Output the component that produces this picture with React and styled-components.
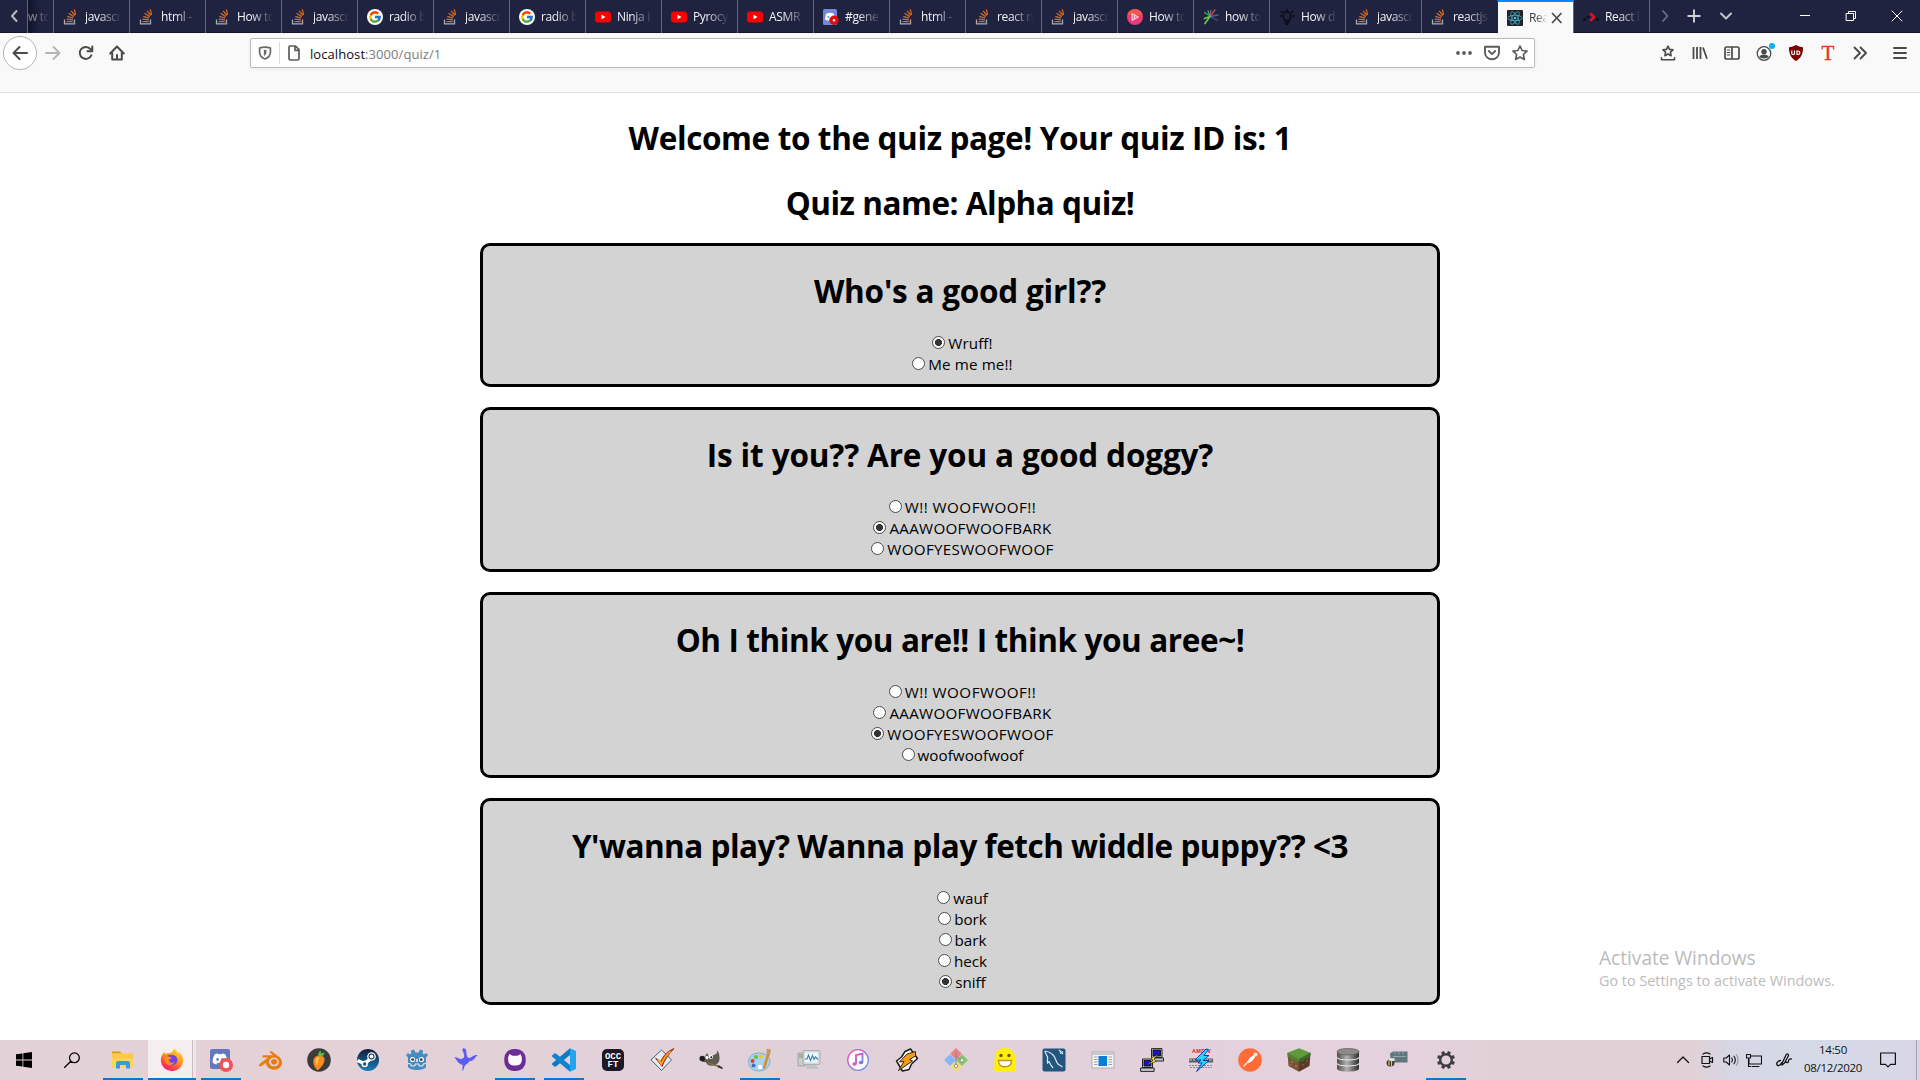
import React from "react";
import styled, { createGlobalStyle, css } from "styled-components";
import { FcGoogle } from "react-icons/fc";
import { FaReact, FaDiscord } from "react-icons/fa";
import { SiBlender } from "react-icons/si";

const ui = '"Open Sans", "Noto Sans", sans-serif';

const GlobalStyle = createGlobalStyle`
  html, body { margin: 0; padding: 0; }
  body { width: 1920px; height: 1080px; overflow: hidden; background: #fff; font-family: ${ui}; }
  svg { display: block; flex: none; }
`;

const Screen = styled.div`
  display: flex;
  flex-direction: column;
  width: 1920px;
  height: 1080px;
  position: relative;
  overflow: hidden;
`;

/* ---------- tab strip ---------- */

const TabStrip = styled.header`
  display: flex;
  height: 33px;
  flex: none;
  background: #20233f;
  box-shadow: inset 0 -1px 0 #11142b;
`;

const StripButton = styled.div`
  box-sizing: border-box;
  display: flex;
  align-items: center;
  justify-content: center;
  width: ${(p) => p.$w}px;
  height: 32px;
  flex: none;
  border-left: ${(p) => (p.$divided ? "1px solid #62657b" : "0")};
`;

const TabBox = styled.div`
  box-sizing: border-box;
  display: flex;
  align-items: center;
  width: 76px;
  height: 33px;
  padding: 1px 0 0 9px;
  flex: none;
  border-left: 1px solid #62657b;
  ${(p) =>
    p.$active &&
    css`
      background: #f9f9fa;
      padding: 0 0 0 9px;
      border-left-color: #20233f;
      border-top: 2px solid #0a84ff;
    `}
`;

const PartialTab = styled(TabBox)`
  width: 26px;
  padding: 1px 0 0 0;
  background: linear-gradient(to right, #11132a, #20233f 12px);
`;

const TabTitle = styled.span`
  width: ${(p) => p.$w || 39}px;
  margin-left: ${(p) => p.$gap ?? 6}px;
  flex: none;
  overflow: hidden;
  white-space: nowrap;
  font-size: 12px;
  line-height: 18px;
  letter-spacing: -0.35px;
  color: ${(p) => (p.$dark ? "#3a3a40" : "#f2f2f6")};
  opacity: ${(p) => (p.$dim ? 0.5 : 1)};
  -webkit-mask-image: linear-gradient(to right, #000 35%, transparent 93%);
  mask-image: linear-gradient(to right, #000 35%, transparent 93%);
`;

const Grow = styled.div`
  flex: 1;
`;

/* ---------- navigation bar ---------- */

const NavBar = styled.nav`
  box-sizing: border-box;
  display: flex;
  align-items: flex-start;
  height: 60px;
  flex: none;
  padding-left: 3px;
  background: #f9f9fa;
  border-bottom: 1px solid #e0e0e1;
`;

const NavSlot = styled.div`
  display: flex;
  align-items: center;
  justify-content: center;
  width: ${(p) => p.$w || 32}px;
  height: 40px;
  flex: none;
`;

const BackCircle = styled.div`
  box-sizing: border-box;
  display: flex;
  align-items: center;
  justify-content: center;
  width: 34px;
  height: 34px;
  margin-top: 3px;
  border: 1px solid #b4b4b4;
  border-radius: 50%;
  background: #fff;
  flex: none;
`;

const UrlBar = styled.div`
  box-sizing: border-box;
  display: flex;
  align-items: center;
  width: 1285px;
  height: 30px;
  margin: 5px 117px 0 119px;
  border: 1px solid #b9b9bb;
  border-radius: 2px;
  background: #fff;
  box-shadow: 0 1px 4px rgba(0, 0, 0, 0.06);
  flex: none;
`;

const UrlSlot = styled.div`
  display: flex;
  align-items: center;
  justify-content: center;
  width: 28px;
  height: 28px;
  flex: none;
`;

const UrlDivider = styled.div`
  width: 1px;
  height: 22px;
  background: #dcdcdc;
`;

const Address = styled.span`
  margin-left: 2px;
  padding-top: 1px;
  flex: 1;
  font-size: 13px;
  line-height: 18px;
  letter-spacing: 0.07px;
  color: #0c0c0d;
`;

const AddressPath = styled.span`
  color: #7b7b7e;
`;

const NavDivider = styled.div`
  width: 1px;
  height: 33px;
  margin: 3px 0 0 3px;
  background: #dcdcdd;
`;

const TypeMark = styled.span`
  font-family: "Liberation Serif", serif;
  font-size: 21px;
  line-height: 28px;
  color: #dc3a23;
  -webkit-text-stroke: 0.4px #dc3a23;
`;

/* ---------- quiz page ---------- */

const Page = styled.main`
  display: flex;
  flex-direction: column;
  align-items: center;
  flex: 1;
  background: #fff;
`;

const Heading = styled.h1`
  box-sizing: border-box;
  margin: 21.44px 0 0;
  height: 43px;
  padding-top: 2px;
  font-size: 31.5px;
  line-height: 43px;
  font-weight: 700;
  letter-spacing: ${(p) => p.$ls || 0}px;
  white-space: nowrap;
  color: #000;
`;

const CardList = styled.div`
  display: flex;
  flex-direction: column;
  gap: 20px;
  margin-top: 21.12px;
`;

const Card = styled.section`
  box-sizing: border-box;
  display: flex;
  flex-direction: column;
  align-items: center;
  width: 960px;
  height: ${(p) => 102 + p.$rows * 21}px;
  border: 3px solid #000;
  border-radius: 10px;
  background: #d3d3d3;
`;

const Options = styled.div`
  display: flex;
  flex-direction: column;
  align-items: center;
  margin-top: 22.56px;
`;

const Option = styled.label`
  display: flex;
  height: 21px;
  padding-left: 5px;
  font-size: 15.2px;
  line-height: 21px;
  letter-spacing: ${(p) => p.$ls || 0}px;
  white-space: nowrap;
  color: #000;
`;

const Radio = styled.input`
  appearance: none;
  box-sizing: border-box;
  width: 13px;
  height: 13px;
  margin: 3px 3px 0 0;
  border: 1px solid #4a4a4a;
  border-radius: 50%;
  background: #fff;
  &:checked {
    background: radial-gradient(circle, #333 3.2px, #fff 3.8px);
  }
`;

const Watermark = styled.aside`
  position: absolute;
  left: 1599px;
  top: 944px;
  color: #bbb;
  white-space: nowrap;
`;

const WatermarkTitle = styled.div`
  font-size: 19.1px;
  line-height: 28px;
`;

const WatermarkText = styled.div`
  font-size: 14.4px;
  line-height: 18px;
`;

/* ---------- taskbar ---------- */

const Taskbar = styled.footer`
  display: flex;
  height: 40px;
  flex: none;
  background: linear-gradient(
    to right,
    #e2d2d8 0,
    #e5d1d8 300px,
    #e0d1d8 800px,
    #e4d1de 1400px,
    #e1d1d6 1500px,
    #e1d1d6 1690px,
    #d6d6e4 1730px,
    #d5dae6 1800px,
    #d8d6e6 1920px
  );
`;

const TaskSlot = styled.div`
  display: flex;
  align-items: center;
  justify-content: center;
  width: ${(p) => p.$w || 48}px;
  height: 40px;
  flex: none;
`;

const Launcher = styled.div`
  box-sizing: border-box;
  display: flex;
  align-items: center;
  justify-content: center;
  width: ${(p) => (p.$focused ? 48 : 40)}px;
  height: 40px;
  margin: ${(p) => (p.$focused ? "0 0 0 1px" : "0 4px 0 5px")};
  padding-top: 2px;
  border-bottom: 2px solid ${(p) => (p.$open ? "#0078d7" : "transparent")};
  background: ${(p) =>
    p.$focused
      ? "linear-gradient(to right, #f5eef1 44px, #cbbcc2 44px 45px, #efe6ea 45px) padding-box"
      : "none"};
  flex: none;
`;

const Launchers = styled.div`
  display: flex;
  margin-left: 2px;
`;

const Clock = styled.div`
  width: 66px;
  margin-left: -1px;
  padding-top: 1px;
  text-align: center;
  font-size: 11.5px;
  line-height: 18px;
  letter-spacing: -0.3px;
  color: #111;
  flex: none;
`;

const ShowDesktop = styled.div`
  width: 3px;
  height: 40px;
  margin-left: 6px;
  border-left: 1px solid #a3a3b3;
`;

/* ---------- small drawings ---------- */

const Icon = ({ s = 16, v = 16, children, ...rest }) => (
  <svg width={s} height={s} viewBox={`0 0 ${v} ${v}`} fill="none" {...rest}>
    {children}
  </svg>
);

const Line = ({ d, c = "#4a4a4d", w = 2, s = 16, cap = "round", children }) => (
  <Icon s={s} stroke={c} strokeWidth={w} strokeLinecap={cap} strokeLinejoin="round">
    <path d={d} />
    {children}
  </Icon>
);

const StackIcon = () => (
  <Icon>
    <path d="M1.500 10.500v4.300h10v-4.300" stroke="#a9abb3" strokeWidth="1.300" />
    <path d="M3.500 12.600h6.300M3.600 10.200l6.300.6M4.300 7.400l5.800 1.700M5.600 4.300l5.200 3.300M8.200 1.900l3.700 4.600M11.300.4l1.300 5.400" stroke="#d96a1c" strokeWidth="1.250" />
  </Icon>
);

const DiscordTab = () => (
  <Icon>
    <rect width="14" height="16" rx="1.500" fill="#7289da" />
    <path d="M3 5c2.500-1.600 5.500-1.600 8 0l1 5.500c-3 1.800-7 1.800-10 0z" fill="#fff" />
    <circle cx="5.300" cy="8" r="1" fill="#7289da" />
    <circle cx="11" cy="11.300" r="4.700" fill="#e00b0b" />
    <circle cx="11" cy="11.300" r="1.200" fill="#fff" />
  </Icon>
);

const PinkPlay = () => (
  <Icon>
    <circle cx="8" cy="8" r="8" fill="#ec3a72" />
    <path d="M0.300 6a8 8 0 0 1 15.400 0z" fill="#f2584c" />
    <path d="M5 4.500v7l6.500-3.500zM7.500 5.800v4.400" stroke="#fbd0da" strokeWidth="1" fill="#f07a94" />
  </Icon>
);

const Burst = () => (
  <Icon strokeWidth="1.300" strokeLinecap="round">
    <path d="M7 7L1.500 3.500M7 7L5 1.800" stroke="#4fa85a" />
    <path d="M7 7l1-5.500" stroke="#7a5bb0" />
    <path d="M7.500 7l4.500-6" stroke="#d6483b" />
    <path d="M7.500 7.500L15 6" stroke="#3f6f86" />
    <path d="M8 8l6.500 3.500" stroke="#4a4a96" />
    <path d="M7 7.500L2 14.500M7 7.500l-5.500 2" stroke="#6cc04a" strokeWidth="1.700" />
  </Icon>
);

const Bulb = () => (
  <Icon stroke="#080a14" strokeWidth="1.500" strokeLinecap="round">
    <path d="M5.800 11.500C5.500 9.800 4 9 4 6.800a4 4 0 0 1 8 0c0 2.200-1.500 3-1.800 4.700zM6 13.500h4M7 15.200h2M8 .5v.8M1 7h1M14 7h1M2.500 2.500l.6.600M13.500 2.500l-.6.600" />
  </Icon>
);

const ReactTab = () => (
  <Icon>
    <rect width="16" height="16" rx="1" fill="#222429" />
    <g transform="translate(0.500 0.500)">
      <FaReact size={15} color="#4fc0de" />
    </g>
  </Icon>
);

const RouterTab = () => (
  <Icon>
    <circle cx="1.500" cy="10.500" r="1.500" fill="#0b0c14" />
    <circle cx="5" cy="8" r="1.300" fill="#0b0c14" />
    <circle cx="14.500" cy="10.500" r="1.500" fill="#0b0c14" />
    <path d="M8 5l3 3-3 3.200" stroke="#d7122f" strokeWidth="2.600" strokeLinecap="round" strokeLinejoin="round" />
  </Icon>
);

const tabIcons = {
  stack: <StackIcon />,
  google: (
    <Icon>
      <circle cx="8" cy="8" r="8" fill="#fff" />
      <g transform="translate(1 1)">
        <FcGoogle size={14} />
      </g>
    </Icon>
  ),
  youtube: (
    <Icon>
      <rect y="2.500" width="16" height="11" rx="3" fill="#f00" />
      <path d="M6.500 5.700v4.600l4-2.300z" fill="#fff" />
    </Icon>
  ),
  discord: <DiscordTab />,
  pink: <PinkPlay />,
  burst: <Burst />,
  bulb: <Bulb />,
  react: <ReactTab />,
  router: <RouterTab />,
};

const tabs = [
  ["stack", "javascr"],
  ["stack", "html -"],
  ["stack", "How to"],
  ["stack", "javascr"],
  ["google", "radio b"],
  ["stack", "javascr"],
  ["google", "radio b"],
  ["youtube", "Ninja i"],
  ["youtube", "Pyrocy"],
  ["youtube", "ASMR"],
  ["discord", "#gene"],
  ["stack", "html -"],
  ["stack", "react n"],
  ["stack", "javascr"],
  ["pink", "How to"],
  ["burst", "how to"],
  ["bulb", "How d"],
  ["stack", "javascr"],
  ["stack", "reactjs"],
  ["react", "Rea", true],
  ["router", "React l"],
];

const questions = [
  { title: "Who's a good girl??", ls: -0.22, options: ["Wruff!", "Me me me!!"], pick: 0 },
  {
    title: "Is it you?? Are you a good doggy?",
    ls: -0.15,
    options: ["W!! WOOFWOOF!!", "AAAWOOFWOOFBARK", "WOOFYESWOOFWOOF"],
    pick: 1,
  },
  {
    title: "Oh I think you are!! I think you aree~!",
    ls: -0.4,
    options: ["W!! WOOFWOOF!!", "AAAWOOFWOOFBARK", "WOOFYESWOOFWOOF", "woofwoofwoof"],
    pick: 2,
  },
  {
    title: "Y'wanna play? Wanna play fetch widdle puppy?? <3",
    ls: -0.5,
    options: ["wauf", "bork", "bark", "heck", "sniff"],
    pick: 4,
  },
];

const optionSpacing = {
  "W!! WOOFWOOF!!": 0.47,
  AAAWOOFWOOFBARK: 0.28,
  WOOFYESWOOFWOOF: 0.31,
  "Me me me!!": 0.1,
  woofwoofwoof: 0.04,
  "Wruff!": 0.1,
};

const Explorer = () => (
  <Icon s={24} v={24}>
    <path d="M1 3.500h8l2 2.500h-10z" fill="#d99c0b" />
    <path d="M1 5.500h21.500v14H1z" fill="#ffd561" />
    <path d="M1 5.500h21.500v5H1z" fill="#fcc94b" />
    <path d="M5 20.500v-5.500a2 2 0 0 1 2-2h10a2 2 0 0 1 2 2v5.500h-4v-3.500h-6v3.500z" fill="#3a97e0" />
  </Icon>
);

const Firefox = () => (
  <Icon s={24} v={24}>
    <defs>
      <linearGradient id="ff" x1="0.800" y1="0" x2="0.200" y2="1">
        <stop offset="0" stopColor="#ffe226" />
        <stop offset="0.450" stopColor="#ff9026" />
        <stop offset="0.750" stopColor="#ff3f4a" />
        <stop offset="1" stopColor="#e2128a" />
      </linearGradient>
    </defs>
    <path d="M14 .5c2 1.500 3.500 3 4.200 5 .8-.6.8-1.200.8-1.800 3 2.800 4.500 6 4.300 9.300A11.300 11.300 0 0 1 .8 13C.7 9.500 2 6.500 4.500 3.800c0 1.400.3 2 1 2.700C7 5 8.500 4.800 10 5.200 11.500 4.500 13.200 3 14 .5z" fill="url(#ff)" />
    <path d="M7 8c3-1.800 6-1.500 8.500 0 2.300 2 2.500 5 .8 7.300-2 2.300-5.600 2.400-7.600.3C7 14 7 12 8 10.800c1.200-.3 2.500-.3 3.500-1.200C10 9 8.500 8.800 7 8z" fill="#7542e5" />
    <path d="M4.500 9c1.500 0 3 .6 5.500.8l1.800.1c-.6 1-2.300 1.200-3 2 .5 2.800 3.500 3.600 6 2-2 3.600-6.500 4-9 1C4.200 13 4 11 4.500 9z" fill="#ff8b1f" />
  </Icon>
);

const DiscordApp = () => (
  <Icon s={24} v={24}>
    <rect x="1" y="1" width="20" height="20" rx="2" fill="#6578bd" />
    <g transform="translate(3 3)">
      <FaDiscord size={16} color="#fff" />
    </g>
    <circle cx="17" cy="17" r="7" fill="#ef5457" />
    <circle cx="17" cy="17" r="3.200" fill="#fff" />
  </Icon>
);

const FruityLoops = () => (
  <Icon s={24} v={24}>
    <circle cx="12" cy="12" r="11.800" fill="#3a3d3b" />
    <path d="M7.300 10c2-3 7.400-3.300 9.700-.5 2 3-1.500 9.500-6.500 12.800C7 19.500 5 13.500 7.300 10z" fill="#ff8a1d" />
    <path d="M8.800 11c1-1.500 2.500-2 3.700-1.500-1 2-2 5-2 8.500C8.800 15.500 8 13 8.800 11z" fill="#ffc25a" />
    <path d="M11.500 8.500C10.500 6 12 3.500 13.500 2.500c.4 1.500.8 2 .8 3.200 1-1 2-1 3.200-.5-.5 2-2.300 4-6 3.300z" fill="#61b94b" />
  </Icon>
);

const Steam = () => (
  <Icon s={24} v={24}>
    <defs>
      <linearGradient id="st" x1="0" y1="0" x2="0" y2="1">
        <stop offset="0" stopColor="#111d3b" />
        <stop offset="1" stopColor="#1a7fb5" />
      </linearGradient>
    </defs>
    <circle cx="12" cy="12" r="11" fill="url(#st)" />
    <path d="M1.500 12.500l7 3 4-3 3.500-4" stroke="#fff" strokeWidth="3.500" />
    <circle cx="15.500" cy="8.500" r="4.300" fill="#fff" />
    <circle cx="15.500" cy="8.500" r="3" fill="#16284a" />
    <circle cx="15.500" cy="8.500" r="2" fill="#fff" />
    <circle cx="8.700" cy="16" r="3.200" fill="#fff" />
    <circle cx="8.700" cy="16" r="1.700" fill="#194a77" />
  </Icon>
);

const Godot = () => (
  <Icon s={24} v={24}>
    <path d="M9 1.500l1.500 3h3l1.500-3 3 1-.3 3 1.300 1 2-1.500L23 7l-2 2.500v9.500c-2 4-16 4-18 0V9.500L1 7l2-2 2 1.500 1.300-1-.3-3z" fill="#478cbf" />
    <path d="M3 15.500l3 .5v2h4v-2h4v2h4v-2l3-.5" stroke="#e8eef2" strokeWidth="1" />
    <circle cx="7.500" cy="11.500" r="2.500" fill="#fff" />
    <circle cx="16.500" cy="11.500" r="2.500" fill="#fff" />
    <circle cx="7.700" cy="11.600" r="1.400" fill="#414042" />
    <circle cx="16.300" cy="11.600" r="1.400" fill="#414042" />
    <path d="M12 11v3" stroke="#fff" strokeWidth="1.400" />
  </Icon>
);

const Bird = () => (
  <Icon s={24} v={24}>
    <path d="M9.300 0c2.200.3 3.200 1.800 3 3.700-.1 1.800.4 3.300 1.200 5.300 1.500 1.500 3 1 4.500-.2 1.700-1.300 3.500-2 6-1.800-1.300.5-2 1.500-3 3-1.300 2-3 3-5.500 3.300-1.300 2.200-3.500 3-4.500 4.200-1 1.500-1 3.500-2.500 6 0-2.500-.3-4.500.3-6.500C6 16 3.500 14.500 2.500 12 2 10.800 1.200 10 .2 9.300c2-.3 3.300.6 4.600 1.200 1.700.7 3.200.5 4.500-.5 1.200-1 1.200-2.500.5-4.500C9 3.800 9 2.500 7.800 2c.5-.3 1-.3 1.500-2z" fill="#5a5cf5" />
  </Icon>
);

const GithubApp = () => (
  <Icon s={24} v={24}>
    <rect x="1.300" y="1" width="21.400" height="22" rx="9.500" fill="#6b2c94" />
    <path d="M6.500 6l3 1.800h5l3-1.800c1.200 2 1.600 3.800 1.300 6.500-.5 3.800-2.800 5-6.800 5s-6.300-1.200-6.800-5C4.900 9.800 5.300 8 6.500 6z" fill="#fdf8ff" />
  </Icon>
);

const VsCode = () => (
  <Icon s={24} v={24}>
    <path d="M18 .3L24 3v18l-6 2.700z" fill="#23a5ee" />
    <path d="M18 .3v6.700L4 18.500l-1.500.3L0 16.500v-1z" fill="#0f79c4" />
    <path d="M0 7.500l2.500-2.300L4 5.500 18 17v6.700L0 8.500z" fill="#1184cf" />
  </Icon>
);

const Occ = () => (
  <Icon s={24} v={24}>
    <rect x="1" y="1" width="22" height="22" rx="5" fill="#1d1727" />
    <g fill="#fff" fontFamily="Liberation Mono, monospace" fontWeight="700" fontSize="9" textAnchor="middle">
      <text x="12" y="11">OCC</text>
      <text x="12" y="19">FT</text>
    </g>
  </Icon>
);

const CheckApp = () => (
  <Icon s={24} v={24}>
    <path d="M11.500 2l10 9.800-10 10.700-10.500-10.700z" fill="#e3ebf4" stroke="#545a66" />
    <path d="M5.500 10l5 4C13 8 17 3.500 24 .5c-5 5-9 11-12 18z" fill="#e04b14" stroke="#8c1d0a" strokeWidth=".8" />
    <path d="M8 11.500l3.300 4.500C14 10 17 6 20.500 3.300" stroke="#f9a41e" strokeWidth="1.700" />
  </Icon>
);

const Gimp = () => (
  <Icon s={24} v={24}>
    <path d="M1 9.500c1.500-1 3-1 4.500-.5L8 5l2 3.500c2-1 5-1 7.500-3 .7-1 .8-2 .8-3.500 2 3 3 8 1.700 11.500-1.500 3.500-6 5-9.500 4-2-.5-3-2-3.700-3.500-2 .5-5-.5-5.800-2.500z" fill="#5f5a50" />
    <circle cx="3.200" cy="10.500" r="2.700" fill="#1c1c1c" />
    <circle cx="8" cy="9.500" r="1.700" fill="#fff" />
    <circle cx="12" cy="9" r="2.100" fill="#fff" />
    <circle cx="12.300" cy="9.300" r="1" fill="#111" />
    <path d="M9 15c4 1.500 8 1.500 14 5" stroke="#86684a" strokeWidth="1.600" />
    <path d="M19.500 17l4.500 3-1 1-4.500-2z" fill="#333" />
  </Icon>
);

const Paint = () => (
  <Icon s={24} v={24}>
    <path d="M11 5c6 0 11 3 11 8.500S17 23 10.500 23C4 23 .5 18.500.5 13.500S5 5 11 5z" fill="#a9d3ea" stroke="#6fa3c4" strokeWidth=".8" />
    <circle cx="4.500" cy="13" r="2" fill="#e03a2f" />
    <circle cx="8" cy="9" r="2" fill="#5fc247" />
    <circle cx="13" cy="8.500" r="2" fill="#f5c52a" />
    <circle cx="5.500" cy="17.500" r="2" fill="#3a6fd0" />
    <circle cx="12" cy="19" r="2.200" fill="#fff" />
    <path d="M20.500 5L16 20.500" stroke="#d98932" strokeWidth="2.600" />
    <path d="M18.500.8l4.500.6-1.200 6-3-.8z" fill="#c8975d" />
  </Icon>
);

const Monitor = () => (
  <Icon s={24} v={24}>
    <path d="M1 5h7v13H1z" fill="#c9ccc9" stroke="#8f9491" strokeWidth=".7" />
    <path d="M2 7h5M2 9h5" stroke="#6da06f" />
    <rect x="6" y="2.500" width="17" height="14" rx="1" fill="#d4d8d9" stroke="#999fa0" strokeWidth=".7" />
    <rect x="8" y="4.500" width="13" height="10" fill="#eff6fa" />
    <path d="M8 11h2l1.500-4 2 5.500 2-5 1.500 4 1.500-2.500 2.500 2.500" stroke="#2f7fb5" strokeWidth="1.100" />
    <path d="M10 17h9l3 4H9z" fill="#bfc4c5" />
  </Icon>
);

const Itunes = () => (
  <Icon s={24} v={24}>
    <defs>
      <linearGradient id="it" x1="0" y1="0" x2="1" y2="1">
        <stop offset="0" stopColor="#f45b8c" />
        <stop offset="0.500" stopColor="#a66be0" />
        <stop offset="1" stopColor="#4eaef2" />
      </linearGradient>
    </defs>
    <circle cx="12" cy="12" r="10.300" fill="#fdfaff" stroke="url(#it)" strokeWidth="1.300" />
    <path d="M10 15.500V7l6.500-1.300v8.300" stroke="url(#it)" strokeWidth="1.900" />
    <ellipse cx="8.500" cy="16" rx="2.200" ry="1.800" fill="#d15fb8" />
    <ellipse cx="15" cy="14.500" rx="2.200" ry="1.800" fill="#7d78e6" />
  </Icon>
);

const Winamp = () => (
  <Icon s={24} v={24}>
    <path d="M10 3.500L15.500 1l7 9.500-6 5.500-2.500 5.500-6.500 1.500L1.500 13l5-4z" fill="#fff" stroke="#1b1b1b" strokeWidth="1.500" strokeLinejoin="round" />
    <path d="M20.500 3.500L12 6l-7.500 8 4.500-.5L3.500 22.500 17.500 13l-3-1.500 6-3.500z" fill="#f79a1c" stroke="#3b2404" strokeWidth="1" strokeLinejoin="round" />
  </Icon>
);

const GitApp = () => (
  <Icon s={24} v={24}>
    <path d="M12 0l5.800 5.800L12 11.500 6.200 5.800z" fill="#f08080" />
    <path d="M6 6.200l5.900 5.900L6 18 .1 12.100z" fill="#86b7f5" />
    <path d="M18 6.200l5.900 5.900L18 18l-5.900-5.900z" fill="#83c66e" />
    <path d="M12 12.700l5.800 5.700L12 24l-5.800-5.600z" fill="#f6dc74" />
    <path d="M12 3.500v15M12 8l5.500 4.500" stroke="#9d8f92" strokeWidth="1.300" />
    <circle cx="12" cy="18" r="1.700" fill="#fff" stroke="#9d8f92" />
    <circle cx="18" cy="12.300" r="1.700" fill="#fff" stroke="#9d8f92" />
  </Icon>
);

const Smiley = () => (
  <Icon s={24} v={24}>
    <path d="M2 8C3 2 7 .3 12 .3S21 2 22 8c.8 5 1 8 .3 10l1.200 3-1.500 2.700H2L.5 21l1.200-3C1 16 1.200 13 2 8z" fill="#ffef0a" />
    <circle cx="8" cy="7.500" r="1.700" fill="#6a5508" />
    <circle cx="16" cy="7.500" r="1.700" fill="#6a5508" />
    <path d="M5.500 12.500h13c0 4-2.500 6.300-6.500 6.300s-6.500-2.300-6.500-6.300z" fill="#fff" stroke="#c8922b" strokeWidth="1.400" />
  </Icon>
);

const Mysql = () => (
  <Icon s={24} v={24}>
    <rect x=".5" y=".5" width="23" height="23" rx="2" fill="#23567e" />
    <path d="M3 3c3 .5 6 1.500 8.500 4.500 2 2.500 2.500 5.500 4 8 1.500 1.500 3 2 5 3.500M3 3c0 2 1.500 4 2.500 5.500.5 2-.5 4 0 6.500l1.500-1.500c1 2 2 4.500 4 6.500M17 2l4 4M18 5.500l3-2" stroke="#dce8f0" strokeWidth="1.200" />
  </Icon>
);

const WindowApp = () => (
  <Icon s={24} v={24}>
    <rect x="1" y="4" width="22" height="16" fill="#f4f4f4" stroke="#a0a4a6" strokeWidth=".8" />
    <rect x="1.400" y="4.400" width="21.200" height="2.500" fill="#c3c7c9" />
    <rect x="7.500" y="8" width="8.500" height="10" fill="#0c7cd6" />
    <path d="M3 9h3.500M3 11.500h3.500M3 14h3.500M3 16.500h3.500M17.500 9H21M17.500 11.500H21M17.500 14H21M17.500 16.500H21" stroke="#9aa0a3" />
  </Icon>
);

const Putty = () => (
  <Icon s={24} v={24} stroke="#111" strokeWidth=".9">
    <path d="M11.500.6h10.500v9H11.500z" fill="#c8c8c8" />
    <path d="M13 2h7.500v6H13z" fill="#1414c8" />
    <path d="M14 10h9.500v3H14z" fill="#c8c8c8" />
    <path d="M2.500 11h10v8.500h-10z" fill="#c8c8c8" />
    <path d="M4 12.500h7v5.500H4z" fill="#1414c8" />
    <path d="M.6 20h13.500v3.400H.6z" fill="#c8c8c8" />
    <path d="M19 6l-8 4 2 2.500-6.500 4.500 9.500-3.500-2-3z" fill="#ffec1a" strokeWidth=".6" />
  </Icon>
);

const Overclock = () => (
  <Icon s={24} v={24}>
    <path d="M0 12.500h24" stroke="#5b5b60" strokeWidth="4" />
    <path d="M0 12h24" stroke="#c9c9cf" strokeWidth="1" strokeDasharray="3 1" />
    <text x="3" y="5" fontFamily="Liberation Sans, sans-serif" fontWeight="700" fontSize="5.500" fill="#e01126" textLength="19">AMD V</text>
    <path d="M0 17.500h24M1 19.500h22" stroke="#8a8a92" strokeWidth="1.200" strokeDasharray="2 1" />
    <path d="M17 1L6 12h6l-3 3h4l-5.500 8.500L20 12.500h-6l6-5h-5l4.500-6z" fill="#1fd8ff" stroke="#102ca8" strokeWidth=".9" />
  </Icon>
);

const Postman = () => (
  <Icon s={24} v={24}>
    <circle cx="12" cy="12" r="11.800" fill="#ff6c37" />
    <path d="M5.500 18.500L13 10.500" stroke="#ffe0d4" strokeWidth="1.300" />
    <path d="M9.500 14.500l2-4.500 4-3 1.800 1.800-3 4-3.500 2.200z" fill="#fff" />
    <circle cx="17.500" cy="6.500" r="2.100" fill="#ffe0d4" />
  </Icon>
);

const GrassBlock = () => (
  <Icon s={24} v={24}>
    <path d="M12 .3l11.500 4.500L12 11 .5 4.800z" fill="#5f9a3d" />
    <path d="M.5 4.800L12 11v12.700L1.500 18z" fill="#7b5236" />
    <path d="M23.500 4.800L12 11v12.700L22.500 18z" fill="#5a3b27" />
    <path d="M.5 4.800L12 11v3l-2-1-1 1-2-2.500-2 .5-2-2.500L.7 9z" fill="#4d8433" />
    <path d="M23.500 4.800L12 11v3l2-1 2 .5 2-3 2 .5 3.300-3z" fill="#3c6b27" />
    <path d="M4 13h2v2H4zM8 17h2v2H8zM3 16h1.500v1.500H3z" fill="#9a7350" />
    <path d="M15 16h2v2h-2zM19 12h2v2h-2z" fill="#75513a" />
  </Icon>
);

const Database = () => (
  <Icon s={24} v={24}>
    <defs>
      <linearGradient id="db">
        <stop offset="0" stopColor="#4c4c4c" />
        <stop offset=".45" stopColor="#b2b2b2" />
        <stop offset="1" stopColor="#2e2e2e" />
      </linearGradient>
    </defs>
    <path d="M1 3.500v17c0 4.200 22 4.200 22 0v-17z" fill="url(#db)" />
    <ellipse cx="12" cy="3.700" rx="11" ry="3.300" fill="#8b8b8b" stroke="#505050" strokeWidth=".6" />
    <path d="M1 9.500c2 3.300 20 3.300 22 0M1 15.500c2 3.300 20 3.300 22 0" stroke="#eee" strokeWidth="1.100" />
  </Icon>
);

const Bee = () => (
  <Icon s={24} v={24}>
    <path d="M5 5.500l3-2h14.500v11H6z" fill="#61757d" />
    <path d="M10 3.500v3M14 3.500v3M18 3.500v3M8 8.500h13" stroke="#93a6ad" />
    <ellipse cx="5.500" cy="15" rx="4" ry="3.500" fill="#3d3a2e" />
    <path d="M4 12.500v5M6.500 12v6" stroke="#e0c548" strokeWidth="1.200" />
    <ellipse cx="7" cy="11.500" rx="3" ry="1.500" fill="#dde4e6" />
  </Icon>
);

const Settings = () => (
  <Icon s={24} v={24} stroke="#3f3f42">
    <circle cx="12" cy="12" r="5.800" strokeWidth="2.400" />
    <path d="M12 3v3M12 18v3M3 12h3M18 12h3" strokeWidth="3.200" transform="rotate(22.500 12 12)" />
    <path d="M12 3v3M12 18v3M3 12h3M18 12h3" strokeWidth="3.200" transform="rotate(67.500 12 12)" />
  </Icon>
);

const launchers = [
  { icon: <Explorer />, open: true },
  { icon: <Firefox />, open: true, focused: true },
  { icon: <DiscordApp />, open: true },
  { icon: <SiBlender size={23} color="#e87d0d" /> },
  { icon: <FruityLoops /> },
  { icon: <Steam /> },
  { icon: <Godot /> },
  { icon: <Bird /> },
  { icon: <GithubApp />, open: true },
  { icon: <VsCode />, open: true },
  { icon: <Occ /> },
  { icon: <CheckApp /> },
  { icon: <Gimp /> },
  { icon: <Paint />, open: true },
  { icon: <Monitor /> },
  { icon: <Itunes /> },
  { icon: <Winamp /> },
  { icon: <GitApp /> },
  { icon: <Smiley /> },
  { icon: <Mysql /> },
  { icon: <WindowApp /> },
  { icon: <Putty /> },
  { icon: <Overclock /> },
  { icon: <Postman /> },
  { icon: <GrassBlock /> },
  { icon: <Database /> },
  { icon: <Bee /> },
  { icon: <Settings />, open: true },
];

export default function App() {
  return (
    <Screen>
      <GlobalStyle />
      <TabStrip>
        <StripButton $w={27}>
          <Line d="M10.500 3L6 8l4.500 5" c="#b9bac4" />
        </StripButton>
        <PartialTab>
          <TabTitle $dim $gap={0} $w={24}>
            w to
          </TabTitle>
        </PartialTab>
        {tabs.map(([icon, title, active], i) => (
          <TabBox key={i} $active={active}>
            {tabIcons[icon]}
            <TabTitle $dark={active} $w={active ? 20 : 39}>
              {title}
            </TabTitle>
            {active && <Line d="M3.500 3.500l8.500 9M12 3.500l-8.500 9" w={1.7} />}
          </TabBox>
        ))}
        <StripButton $w={31} $divided>
          <Line d="M6 3l4.500 5L6 13" c="#6d6f84" w={1.8} />
        </StripButton>
        <StripButton $w={28}>
          <Line d="M8 1.500v13M1.500 8h13" c="#d0d0d8" w={1.9} cap="butt" />
        </StripButton>
        <StripButton $w={35}>
          <Line d="M3 5.500l5 5 5-5" c="#c4c4ce" />
        </StripButton>
        <Grow />
        <StripButton $w={46}>
          <Line d="M3 7.500h10" c="#fff" w={1} cap="butt" />
        </StripButton>
        <StripButton $w={46}>
          <Line d="M3.500 5.500h7v7h-7zM5.500 5.500v-2h7v7h-2" c="#fff" w={1} />
        </StripButton>
        <StripButton $w={46}>
          <Line d="M3 3l10 10M13 3L3 13" c="#fff" w={1} />
        </StripButton>
      </TabStrip>

      <NavBar>
        <BackCircle>
          <Line d="M15 8H1.500M7.500 2L1.500 8l6 6" />
        </BackCircle>
        <NavSlot>
          <Line d="M1 8h13.500M8.500 2l6 6-6 6" c="#b5b5b7" />
        </NavSlot>
        <NavSlot $w={33}>
          <Line d="M13.300 10.300A6 6 0 1 1 12.500 4.200M14.300 1.500v4.800H9.500" />
        </NavSlot>
        <NavSlot $w={29}>
          <Line d="M1.200 8.500L8 1.500l6.800 7M3.200 7.500v7h9.600v-7M8 14v-4" />
        </NavSlot>
        <UrlBar>
          <UrlSlot>
            <Line s={14} d="M8 1.200C5.500 1.200 3.500 1.700 1.800 2.300v4.500c0 4 2.500 6.500 6.200 8 3.700-1.500 6.200-4 6.200-8V2.300C12.500 1.700 10.500 1.200 8 1.200z" w={1.9} c="#68686b">
              <path d="M8 4.300v7.400c2-1 3-2.700 3-5V4.700z" fill="#68686b" stroke="none" transform="translate(-1.300 0)" />
            </Line>
          </UrlSlot>
          <UrlDivider />
          <UrlSlot>
            <Line d="M3.500 1h6L13 4.700V13.500a1.500 1.500 0 0 1-1.500 1.500h-7A1.500 1.500 0 0 1 3 13.500v-11zM9 1.300v4h4" w={1.7} c="#5c5c5f" />
          </UrlSlot>
          <Address>
            localhost<AddressPath>:3000/quiz/1</AddressPath>
          </Address>
          <UrlSlot>
            <Icon>
              <g fill="#5c5c5f">
                <circle cx="2" cy="8" r="1.900" />
                <circle cx="8" cy="8" r="1.900" />
                <circle cx="14" cy="8" r="1.900" />
              </g>
            </Icon>
          </UrlSlot>
          <UrlSlot>
            <Line d="M1 1.800h14V7.500a7 6.800 0 0 1-14 0zM4.800 6L8 9.200 11.200 6" w={1.9} c="#5c5c5f" />
          </UrlSlot>
          <UrlSlot>
            <Line d="M8 1l2.100 4.500 4.900.6-3.600 3.400.9 4.900L8 12l-4.300 2.400.9-4.900L1 6.100l4.900-.6z" w={1.7} c="#5c5c5f" />
          </UrlSlot>
        </UrlBar>
        <NavSlot>
          <Line d="M8 1.200l1.500 3.200 3.500.4-2.600 2.400.7 3.500L8 9l-3.100 1.700.7-3.500L3 4.800l3.500-.4zM1.500 12.800v2h13v-2" w={1.6} />
        </NavSlot>
        <NavSlot>
          <Line d="M1.500 2v12M5 2v12M8.500 2v12M11 2.500l4 11.300" w={1.8} cap="butt" />
        </NavSlot>
        <NavSlot>
          <Line d="M2.500 2h11A1.500 1.500 0 0 1 15 3.500v9a1.500 1.500 0 0 1-1.500 1.500h-11A1.500 1.500 0 0 1 1 12.500v-9A1.500 1.500 0 0 1 2.500 2zM8 2v12" w={1.7}>
            <path d="M3.300 5h2.400M3.300 7.500h2.400M3.300 10h2.400" strokeWidth="1" />
          </Line>
        </NavSlot>
        <NavSlot>
          <Icon s={24} v={24}>
            <circle cx="12" cy="12.500" r="6.800" stroke="#4a4a4d" strokeWidth="1.300" />
            <circle cx="12" cy="10.700" r="2.700" fill="#4a4a4d" />
            <path d="M7.300 15.500c1-2.300 8.400-2.300 9.400 0-1.200 2.500-8.200 2.500-9.400 0z" fill="#4a4a4d" />
            <circle cx="20" cy="5" r="3" fill="#00b3f4" />
          </Icon>
        </NavSlot>
        <NavSlot>
          <Icon>
            <path d="M8 0c2 1.300 4.500 2 7 2.200C15.200 9 13 13 8 16 3 13 .8 9 1 2.200 3.500 2 6 1.300 8 0z" fill="#800000" />
            <path d="M3.800 5.500v3c0 1.600 2.700 1.600 2.700 0v-3M9 6v3.500h1c2.400 0 2.400-3.500 0-3.500z" stroke="#fff" strokeWidth="1.200" />
          </Icon>
        </NavSlot>
        <NavSlot>
          <TypeMark>T</TypeMark>
        </NavSlot>
        <NavSlot>
          <Line d="M2.500 2.500L8 8l-5.500 5.500M8.500 2.500L14 8l-5.500 5.500" w={1.9} />
        </NavSlot>
        <NavDivider />
        <NavSlot $w={42}>
          <Line d="M2 3h12M2 8h12M2 13h12" w={1.9} />
        </NavSlot>
      </NavBar>

      <Page>
        <Heading $ls={-0.38}>Welcome to the quiz page! Your quiz ID is: 1</Heading>
        <Heading $ls={-0.48}>Quiz name: Alpha quiz!</Heading>
        <CardList>
          {questions.map((q, qi) => (
            <Card key={qi} $rows={q.options.length}>
              <Heading $ls={q.ls}>{q.title}</Heading>
              <Options>
                {q.options.map((o, i) => (
                  <Option key={o} $ls={optionSpacing[o]}>
                    <Radio type="radio" name={`q${qi}`} defaultChecked={i === q.pick} />
                    {o}
                  </Option>
                ))}
              </Options>
            </Card>
          ))}
        </CardList>
      </Page>

      <Watermark>
        <WatermarkTitle>Activate Windows</WatermarkTitle>
        <WatermarkText>Go to Settings to activate Windows.</WatermarkText>
      </Watermark>

      <Taskbar>
        <TaskSlot>
          <Icon>
            <path d="M0 2.300L6.500 1.400V7.600H0zM7.300 1.300L16 0v7.600H7.300zM0 8.400h6.500v6.200L0 13.700zM7.300 8.400H16V16l-8.700-1.300z" fill="#000" />
          </Icon>
        </TaskSlot>
        <TaskSlot>
          <Line d="M15.300 5.800a4.900 4.900 0 1 1-9.800 0 4.900 4.900 0 0 1 9.800 0zM6.800 9.300L.5 15.500" c="#000" w={1.3} />
        </TaskSlot>
        <Launchers>
          {launchers.map((l, i) => (
            <Launcher key={i} $open={l.open} $focused={l.focused}>
              {l.icon}
            </Launcher>
          ))}
        </Launchers>
        <Grow />
        <TaskSlot $w={24}>
          <Line d="M2.500 10.500L8 5l5.500 5.500" c="#111" w={1.3} />
        </TaskSlot>
        <TaskSlot $w={24}>
          <Line d="M3 4.500h7.500v7H3zM10.500 7l3-1.500v5l-3-1.500M4 2c2-1.300 5-1.300 7 0M4 14c2 1.300 5 1.300 7 0" c="#111" w={1.2} />
        </TaskSlot>
        <TaskSlot $w={23}>
          <Line d="M.8 6v4h2.400l3.300 3V3L3.200 6zM8.800 6c.8 1.200.8 2.800 0 4M11 4.300c1.600 2.200 1.600 5.200 0 7.400" c="#111" w={1.1}>
            <path d="M13.300 2.700c2.300 3 2.300 7.600 0 10.600" stroke="#999" />
          </Line>
        </TaskSlot>
        <TaskSlot $w={24}>
          <Line d="M5 4h10.500v8H3V7M6 14.500h7M.5 2.500h4v3.500h-4zM2.500 6v8.500h2" c="#111" w={1.1} />
        </TaskSlot>
        <TaskSlot $w={35}>
          <Line d="M6 11.500L10 3c1-2 3-1 2.300 1L8.500 11 6 13zM4.500 8.500C1 9 0 12 1.500 13.500c2 1 3-1 4.500-3M9.500 9.500c1.500 2 3 1 3-.5s1.500-2.500 3-2" c="#111" w={1.3} />
        </TaskSlot>
        <Clock>
          <div>14:50</div>
          <div>08/12/2020</div>
        </Clock>
        <TaskSlot $w={44}>
          <Line d="M.6 1h14.800v11.300H10.500L8 14.800l-2.500-2.500H.6z" c="#111" w={1.2} />
        </TaskSlot>
        <ShowDesktop />
      </Taskbar>
    </Screen>
  );
}
